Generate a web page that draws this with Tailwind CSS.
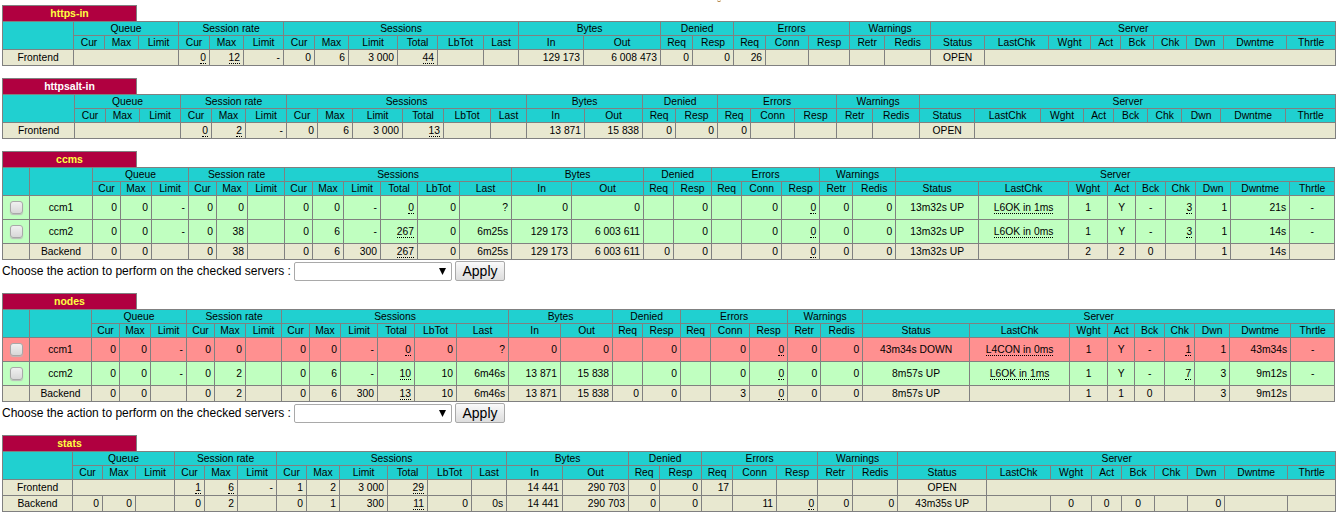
<!DOCTYPE html>
<html lang="en">

<head>
    <meta charset="UTF-8">
    <meta name="viewport" content="width=device-width, initial-scale=1.0">
    <script src="https://cdn.jsdelivr.net/npm/@tailwindcss/browser@4"></script>
    <title>Statistics Report for HAProxy</title>
</head>

<body class="relative bg-white text-black font-['Liberation_Sans',Arial,sans-serif] overflow-hidden">
    <span class="absolute left-[717px] top-0 w-[4px] h-[2px] rounded-b-full border-b border-[#b07a30]"></span>
    <div id="stats" class="pl-[2px] pt-[5px]"></div>

    <script>
        const HEAD = ['Cur', 'Max', 'Limit', 'Cur', 'Max', 'Limit', 'Cur', 'Max', 'Limit', 'Total', 'LbTot', 'Last', 'In', 'Out', 'Req', 'Resp', 'Req', 'Conn', 'Resp', 'Retr', 'Redis', 'Status', 'LastChk', 'Wght', 'Act', 'Bck', 'Chk', 'Dwn', 'Dwntme', 'Thrtle'];
        const GROUPS = [['Queue', 3], ['Session rate', 3], ['Sessions', 6], ['Bytes', 2], ['Denied', 2], ['Errors', 3], ['Warnings', 2], ['Server', 9]];
        const CENTER = ['Status', 'LastChk', 'Wght', 'Act', 'Bck', 'Thrtle'];

        // x of every vertical border, read off the screenshot
        const proxies = [
            {
                name: 'https-in', titleColor: 'text-[#ffff40]', gap: 'mb-[12px]',
                xs: [2, 73, 104, 138, 178, 209, 243, 283, 314, 348, 397, 437, 483, 518, 583, 660, 692, 733, 765, 808, 849, 884, 930, 984, 1048, 1090, 1120, 1153, 1186, 1223, 1286, 1335],
                rows: [['f', 'Frontend|^3|~0|~12|-|0|6|3 000|~44|||129 173|6 008 473|0|0|26|||||OPEN|^8']]
            },
            {
                name: 'httpsalt-in', titleColor: 'text-white', gap: 'mb-[12px]',
                xs: [2, 74, 105, 139, 180, 211, 245, 286, 317, 352, 402, 443, 490, 526, 584, 642, 675, 717, 750, 794, 836, 872, 919, 974, 1040, 1083, 1113, 1147, 1181, 1220, 1285, 1335],
                rows: [['f', 'Frontend|^3|~0|~2|-|0|6|3 000|~13|||13 871|15 838|0|0|0|||||OPEN|^8']]
            },
            {
                name: 'ccms', titleColor: 'text-[#ffff40]', check: true, form: true, gap: 'mb-[12px]',
                xs: [2, 29, 92, 120, 151, 188, 216, 247, 284, 312, 343, 380, 417, 459, 511, 571, 643, 673, 711, 741, 781, 819, 852, 895, 978, 1068, 1107, 1135, 1165, 1195, 1230, 1289, 1334],
                rows: [
                    ['u', 'ccm1|0|0|-|0|0||0|0|-|~0|0|?|0|0||0||0|~0|0|0|13m32s UP|~L6OK in 1ms|1|Y|-|~3|1|21s|-'],
                    ['u', 'ccm2|0|0|-|0|38||0|6|-|~267|0|6m25s|129 173|6 003 611||0||0|~0|0|0|13m32s UP|~L6OK in 0ms|1|Y|-|~3|1|14s|-'],
                    ['b', 'Backend|0|0||0|38||0|6|300|~267|0|6m25s|129 173|6 003 611|0|0||0|~0|0|0|13m32s UP||2|2|0||1|14s|']
                ]
            },
            {
                name: 'nodes', titleColor: 'text-[#ffff40]', check: true, form: true, gap: 'mb-[12px]',
                xs: [2, 29, 91, 119, 150, 186, 214, 245, 281, 309, 340, 377, 414, 456, 508, 560, 612, 642, 680, 710, 749, 787, 820, 862, 969, 1069, 1107, 1134, 1164, 1194, 1229, 1290, 1334],
                rows: [
                    ['d', 'ccm1|0|0|-|0|0||0|0|-|~0|0|?|0|0||0||0|~0|0|0|43m34s DOWN|~L4CON in 0ms|1|Y|-|~1|1|43m34s|-'],
                    ['u', 'ccm2|0|0|-|0|2||0|6|-|~10|10|6m46s|13 871|15 838||0||0|~0|0|0|8m57s UP|~L6OK in 1ms|1|Y|-|~7|3|9m12s|-'],
                    ['b', 'Backend|0|0||0|2||0|6|300|~13|10|6m46s|13 871|15 838|0|0||3|~0|0|0|8m57s UP||1|1|0||3|9m12s|']
                ]
            },
            {
                name: 'stats', titleColor: 'text-[#ffff40]', gap: '',
                xs: [2, 72, 102, 135, 174, 204, 237, 276, 306, 339, 387, 427, 471, 506, 562, 628, 659, 701, 732, 776, 817, 852, 897, 986, 1050, 1091, 1121, 1154, 1187, 1224, 1287, 1335],
                rows: [
                    ['f', 'Frontend|^3|~1|~6|-|1|2|3 000|~29|||14 441|290 703|0|0|17|||||OPEN|^8'],
                    ['b', 'Backend|0|0||0|2||0|1|300|~11|0|0s|14 441|290 703|0|0||11|~0|0|0|43m35s UP||0|0|0||0||']
                ]
            }
        ];

        const ROW_BG = { f: 'bg-[#e8e8d0]', b: 'bg-[#e8e8d0]', u: 'bg-[#c0ffc0]', d: 'bg-[#ff9090]' };
        const ROW_H = { f: 'h-[16px]', b: 'h-[16px]', u: 'h-[24px]', d: 'h-[24px]' };
        const BORDER = 'border border-[#808080] p-0 font-normal overflow-hidden whitespace-nowrap';

        function renderCell(text, col) {
            if (text.startsWith('^')) {
                return `<td colspan="${text.slice(1)}" class="${BORDER}"></td>`;
            }
            const isCenter = col === -1 || CENTER.includes(HEAD[col]);
            const align = isCenter ? 'text-center' : 'text-right pr-[3px]';
            const body = text.startsWith('~')
                ? `<u class="no-underline border-b border-dotted border-black">${text.slice(1)}</u>`
                : text;
            return `<td class="${BORDER} ${align}">${body}</td>`;
        }

        function renderRow(proxy, row) {
            const [kind, data] = row;
            let html = `<tr class="${ROW_H[kind]} ${ROW_BG[kind]}">`;
            if (proxy.check) {
                const box = kind === 'b' ? '' : '<input type="checkbox" class="block mx-auto appearance-none w-[13px] h-[13px] rounded-[3px] border border-[#a8a8a8] bg-linear-to-b from-[#f0f0f0] to-[#d8d8d8] shadow-[0_1px_1px_#bbbbbb]">';
                html += `<td class="${BORDER}">${box}</td>`;
            }
            let col = -1;
            data.split('|').forEach(cell => {
                html += renderCell(cell, col);
                col += cell.startsWith('^') ? Number(cell.slice(1)) : 1;
            });
            return html + '</tr>';
        }

        function renderProxy(proxy) {
            const cols = proxy.xs.slice(1).map((x, i) => `<col style="width:${x - proxy.xs[i]}px">`).join('');
            const total = proxy.xs[proxy.xs.length - 1] - proxy.xs[0];
            const lead = proxy.check
                ? `<th rowspan="2" class="${BORDER}"></th><th rowspan="2" class="${BORDER}"></th>`
                : `<th rowspan="2" class="${BORDER}"></th>`;
            const groups = GROUPS.map(([label, span]) => `<th colspan="${span}" class="${BORDER}">${label}</th>`).join('');
            const heads = HEAD.map(label => `<th class="${BORDER}">${label}</th>`).join('');
            const form = proxy.form ? `
                <div class="flex items-center h-[20px] mt-[1px] text-[12px]">
                    <span class="w-[292px] whitespace-nowrap">Choose the action to perform on the checked servers :</span>
                    <div class="relative w-[158px] h-[19px]">
                        <select class="block w-full h-full appearance-none bg-white border border-[#a9a9a9] rounded-[2px]"></select>
                        <svg class="absolute right-[6px] top-[6px] w-[7px] h-[7px]" viewBox="0 0 7 7"><path d="M0 0H7L3.5 7Z" fill="#000"/></svg>
                    </div>
                    <button class="ml-[3px] w-[50px] h-[20px] text-[14px] leading-[16px] border border-[#a9a9a9] rounded-[2px] bg-linear-to-b from-[#fafafa] to-[#dddddd]">Apply</button>
                </div>` : '';
            return `
                <section class="${proxy.gap}">
                    <div class="w-[135px] h-[16px] border border-b-0 border-[#808080] bg-[#b00040] ${proxy.titleColor} text-[10.5px] leading-[15px] font-bold text-center">${proxy.name}</div>
                    <table class="table-fixed border-collapse text-[10.3px] leading-[12px]" style="width:${total}px">
                        <colgroup>${cols}</colgroup>
                        <tr class="h-[14px] bg-[#20d0d0]">${lead}${groups}</tr>
                        <tr class="h-[14px] bg-[#20d0d0]">${heads}</tr>
                        ${proxy.rows.map(row => renderRow(proxy, row)).join('')}
                    </table>
                    ${form}
                </section>`;
        }

        document.getElementById('stats').innerHTML = proxies.map(renderProxy).join('');
    </script>
</body>

</html>
